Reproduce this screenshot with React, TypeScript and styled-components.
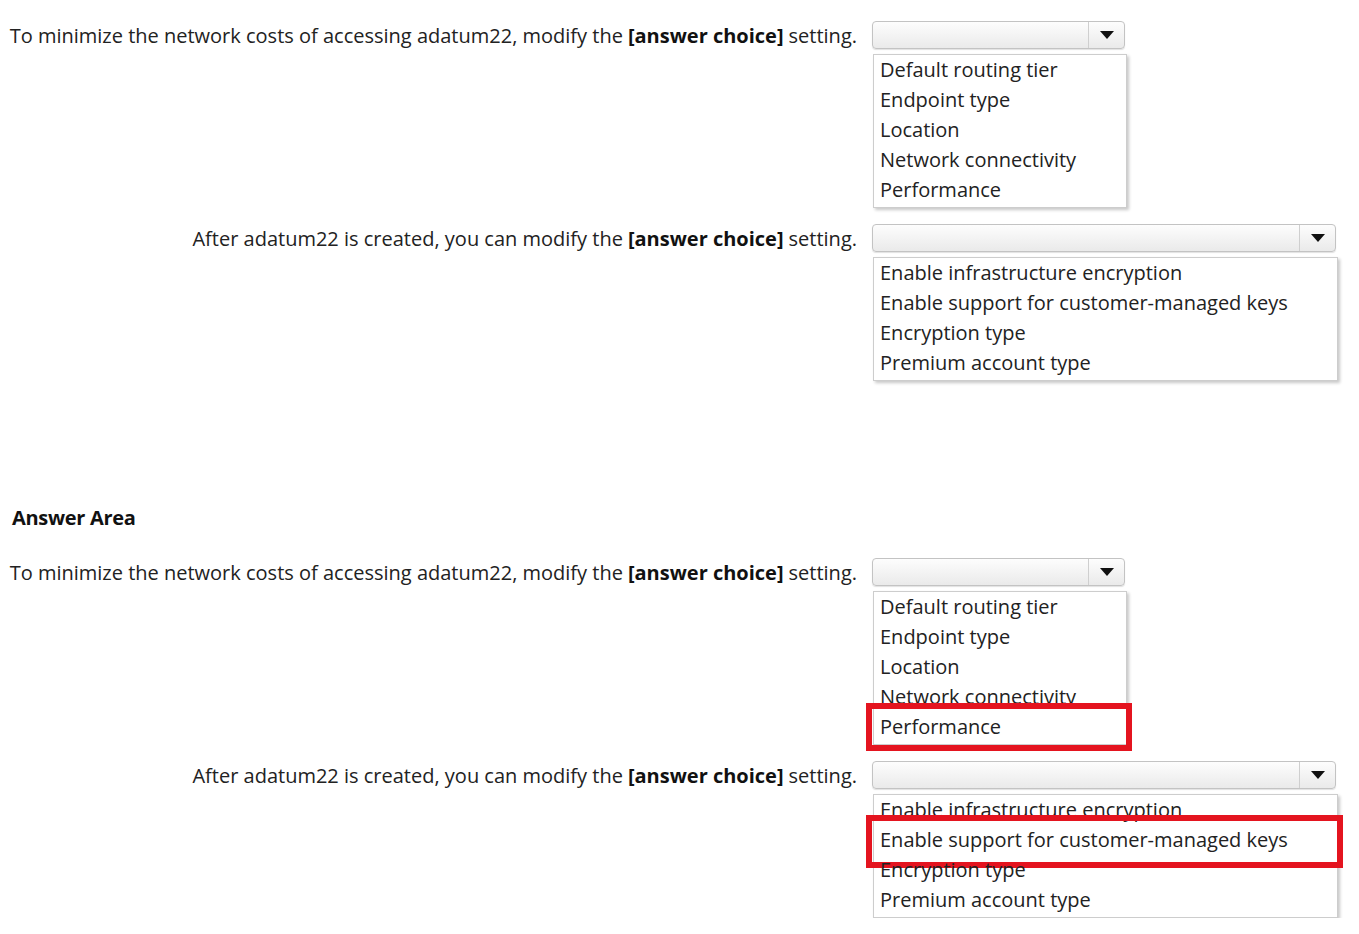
import React from "react";
import styled, { createGlobalStyle } from "styled-components";

//--------------Global--------------

const GlobalStyle = createGlobalStyle`
  body {
    margin: 0;
    background: #ffffff;
    color: #222222;
    font-family: "Open Sans", "Noto Sans", "DejaVu Sans", sans-serif;
    font-size: 20px;
  }
`;

//--------------Styled Components--------------

const Page = styled.div`
  display: flex;
  flex-direction: column;
  padding: 21px 0 0 11px;
`;

const Block = styled.div`
  display: flex;
  flex-direction: column;
  gap: 16px;
`;

const Heading = styled.h2`
  margin: 123px 0 26px 1px;
  height: 28px;
  line-height: 28px;
  font-size: 20px;
  font-weight: 700;
  letter-spacing: -0.3px;
  color: #111111;
`;

const QuestionRow = styled.div`
  display: grid;
  grid-template-columns: 846px auto;
  column-gap: 15px;
  align-items: start;
`;

const Label = styled.div`
  height: 28px;
  display: flex;
  align-items: center;
  justify-content: flex-end;
  white-space: nowrap;

  b {
    font-weight: 700;
    color: #111111;
    margin: 0 5px;
  }
`;

const DropColumn = styled.div`
  display: flex;
  flex-direction: column;
  gap: 5px;
`;

const Select = styled.div<{ $width: number }>`
  width: ${(p) => p.$width}px;
  height: 28px;
  box-sizing: border-box;
  display: flex;
  border: 1px solid #c3c3c3;
  border-radius: 4px;
  background: linear-gradient(#fdfdfd, #eaeaea);
  box-shadow: 0 1px 1px rgba(0, 0, 0, 0.12);
`;

const Field = styled.div`
  flex: 1;
`;

const ArrowCell = styled.div`
  width: 35px;
  display: flex;
  align-items: center;
  justify-content: center;
  border-left: 1px solid #cfcfcf;
`;

const Caret = styled.span`
  width: 0;
  height: 0;
  border-left: 7px solid transparent;
  border-right: 7px solid transparent;
  border-top: 8px solid #111111;
`;

const OptionList = styled.div<{ $width: number }>`
  width: ${(p) => p.$width}px;
  margin-left: 1px;
  box-sizing: border-box;
  border: 1px solid #cdcdcd;
  background: #ffffff;
  padding: 0 0 2px;
  box-shadow: 2px 2px 3px rgba(0, 0, 0, 0.22);
`;

const Option = styled.div`
  position: relative;
  height: 30px;
  line-height: 30px;
  padding-left: 6px;
  white-space: nowrap;
  color: #222222;
`;

const Highlight = styled.span<{ $top: number; $bottom: number }>`
  position: absolute;
  left: -8px;
  right: -6px;
  top: -${(p) => p.$top}px;
  bottom: -${(p) => p.$bottom}px;
  border: 6px solid #e4141f;
  pointer-events: none;
`;

//============================================

type Question = {
  lead: string;
  width: number;
  options: string[];
};

const questions: Question[] = [
  {
    lead: "To minimize the network costs of accessing adatum22, modify the",
    width: 253,
    options: [
      "Default routing tier",
      "Endpoint type",
      "Location",
      "Network connectivity",
      "Performance",
    ],
  },
  {
    lead: "After adatum22 is created, you can modify the",
    width: 464,
    options: [
      "Enable infrastructure encryption",
      "Enable support for customer-managed keys",
      "Encryption type",
      "Premium account type",
    ],
  },
];

// answer per question, with how far the red frame reaches above/below the row
const answers = [
  { text: "Performance", top: 9, bottom: 9 },
  { text: "Enable support for customer-managed keys", top: 10, bottom: 13 },
];

function QuestionBlock({ marked }: { marked?: typeof answers }) {
  return (
    <Block>
      {questions.map((q, i) => (
        <QuestionRow key={q.lead}>
          <Label>
            {q.lead}
            <b>[answer choice]</b>
            setting.
          </Label>
          <DropColumn>
            <Select $width={q.width}>
              <Field />
              <ArrowCell>
                <Caret />
              </ArrowCell>
            </Select>
            <OptionList $width={q.width + 1}>
              {q.options.map((opt) => (
                <Option key={opt}>
                  {opt}
                  {marked && marked[i].text === opt && (
                    <Highlight $top={marked[i].top} $bottom={marked[i].bottom} />
                  )}
                </Option>
              ))}
            </OptionList>
          </DropColumn>
        </QuestionRow>
      ))}
    </Block>
  );
}

export default function App() {
  return (
    <>
      <GlobalStyle />
      <Page>
        <QuestionBlock />
        <Heading>Answer Area</Heading>
        <QuestionBlock marked={answers} />
      </Page>
    </>
  );
}
